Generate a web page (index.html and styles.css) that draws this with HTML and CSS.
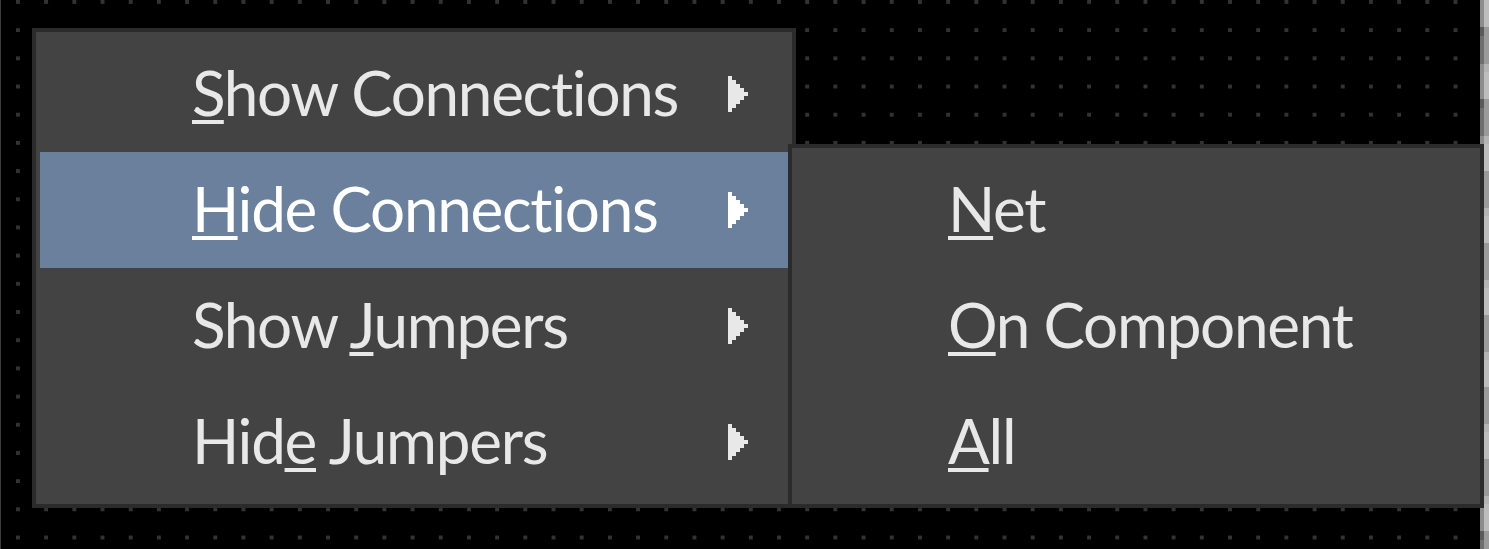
FILE: index.html
```html
<!DOCTYPE html>
<html lang="en">
<head>
<meta charset="utf-8">
<title>Connections menu</title>
<link rel="stylesheet" href="styles.css">
</head>
<body>
<div class="workspace">
  <div class="canvas">
    <ul class="menu">
      <li class="menu-item">
        <span class="label"><u>S</u>how Connections</span>
        <svg class="arrow" width="20" height="36" viewBox="0 0 20 36"><path d="M0 0h4v4h4v4h4v4h4v4h4v4h-4v4h-4v4h-4v4h-4v4h-4z"/></svg>
      </li>
      <li class="menu-item is-open">
        <span class="label"><u>H</u>ide Connections</span>
        <svg class="arrow" width="20" height="36" viewBox="0 0 20 36"><path d="M0 0h4v4h4v4h4v4h4v4h4v4h-4v4h-4v4h-4v4h-4v4h-4z"/></svg>
        <ul class="menu submenu">
          <li class="menu-item"><span class="label"><u>N</u>et</span></li>
          <li class="menu-item"><span class="label"><u>O</u>n Component</span></li>
          <li class="menu-item"><span class="label"><u>A</u>ll</span></li>
        </ul>
      </li>
      <li class="menu-item">
        <span class="label">Show <u>J</u>umpers</span>
        <svg class="arrow" width="20" height="36" viewBox="0 0 20 36"><path d="M0 0h4v4h4v4h4v4h4v4h4v4h-4v4h-4v4h-4v4h-4v4h-4z"/></svg>
      </li>
      <li class="menu-item">
        <span class="label">Hid<u>e</u> Jumpers</span>
        <svg class="arrow" width="20" height="36" viewBox="0 0 20 36"><path d="M0 0h4v4h4v4h4v4h4v4h4v4h-4v4h-4v4h-4v4h-4v4h-4z"/></svg>
      </li>
    </ul>
  </div>
  <div class="edge">
    <div class="edge-inner"></div>
    <div class="edge-outer"></div>
  </div>
</div>
</body>
</html>
```

FILE: styles.css
```css
* {
  box-sizing: border-box;
}

html,
body {
  margin: 0;
  height: 100%;
  background: #000;
  overflow: hidden;
}

body {
  font-family: "Lato", "Open Sans", sans-serif;
}

.workspace {
  display: flex;
  height: 100%;
}

/* dotted drawing grid: one 4px square in the corner of every cell */
.canvas {
  flex: 1;
  border-left: 1px solid #3c3c3c;
  padding: 28px 0 0 31px;
  background-color: #000;
  background-image: conic-gradient(from 270deg at 4px 4px, #333 0 25%, transparent 25% 100%);
  background-size: 28.2px 28.2px;
  background-position: 15px 0;
}

.menu {
  list-style: none;
  margin: 0;
  padding: 4px;
  width: 764px;
  background: #434343;
  border: 4px solid #2b2b2b;
  position: relative;
  z-index: 1;
}

.menu-item {
  position: relative;
  display: flex;
  align-items: flex-start;
  height: 116px;
  padding-left: 152px;
  padding-right: 40px;
  color: #e8e8e8;
  font-size: 62px;
  letter-spacing: -1.3px;
  font-variant-ligatures: none;
}

.menu-item .label {
  flex: 1;
  line-height: 112px;
  white-space: nowrap;
}

.menu-item u {
  text-decoration: underline;
  text-decoration-thickness: 4px;
  text-underline-offset: 4px;
  text-decoration-skip-ink: none;
}

.arrow {
  display: block;
  margin-top: 40px;
  fill: #e8e8e8;
  shape-rendering: crispEdges;
}

.menu-item.is-open {
  background: #6b809d;
  color: #fff;
}

.menu-item.is-open > .arrow {
  fill: #fff;
}

/* cascading popup opened from the highlighted row */
.submenu {
  position: absolute;
  left: 100%;
  top: -8px;
  width: 696px;
  z-index: 2;
}

.submenu .menu-item {
  color: #e8e8e8;
}

/* neighbouring pane edge on the right */
.edge {
  display: flex;
  width: 9px;
  flex: none;
}

.edge-inner {
  width: 4px;
  background: repeating-linear-gradient(to bottom, #8c8c8c 0 27px, #5a5a5a 27px 36px, #6e6e6e 36px 64px, #8c8c8c 64px 72px);
}

.edge-outer {
  width: 5px;
  background: repeating-linear-gradient(to bottom, #bdbdbd 0 27px, #9a9a9a 27px 64px, #b4b4b4 64px 72px);
}
```
